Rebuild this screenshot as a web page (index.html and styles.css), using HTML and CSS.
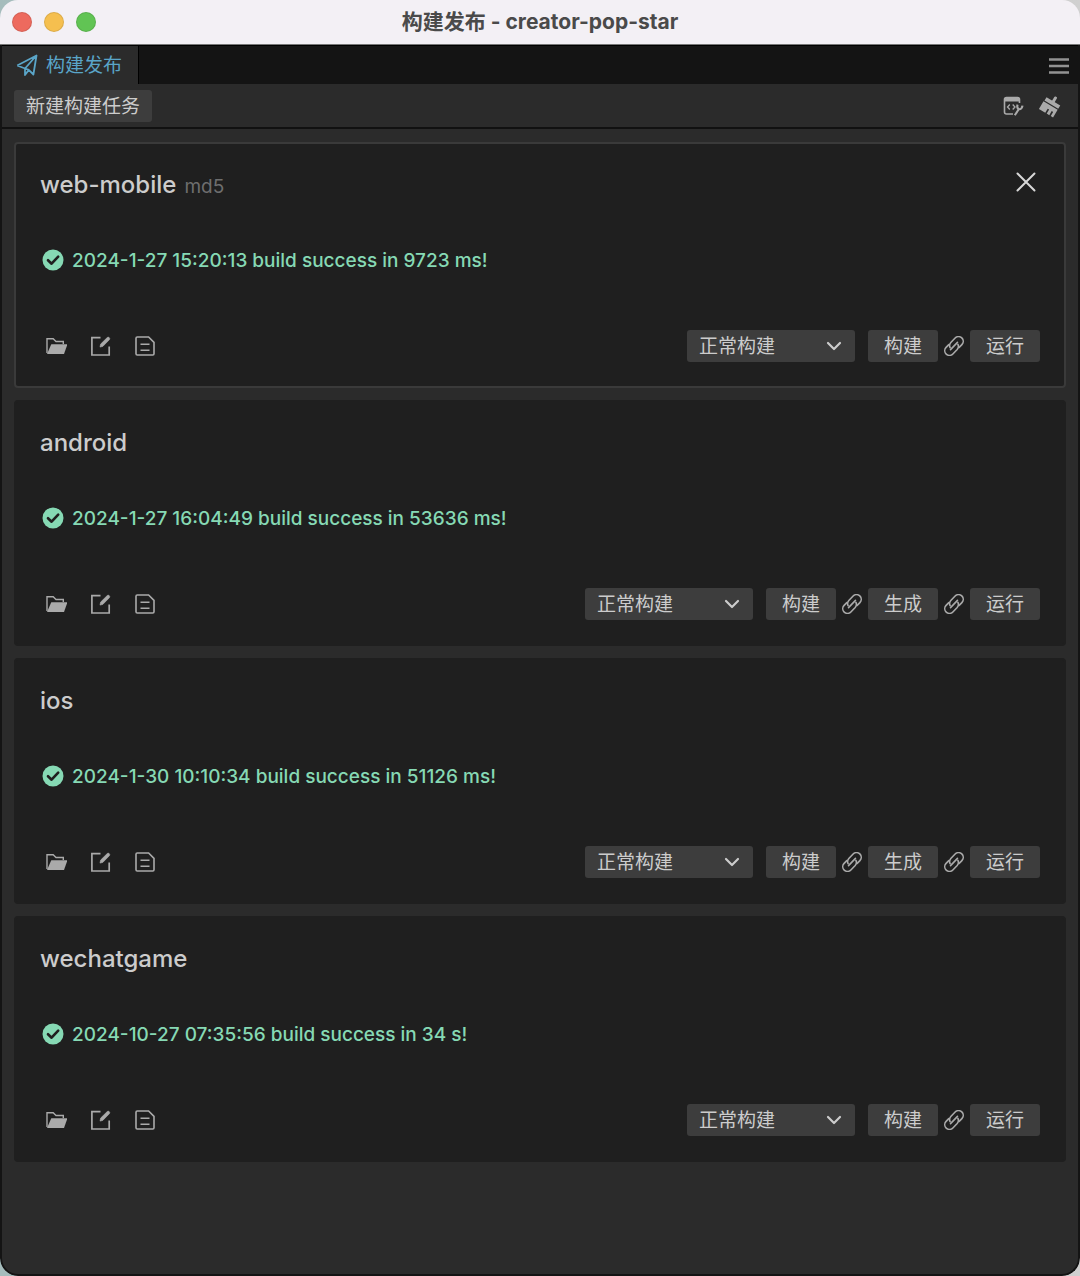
FILE: index.html
```html
<!DOCTYPE html>
<html lang="zh-CN">
<head>
  <meta charset="UTF-8">
  <meta name="viewport" content="width=device-width, initial-scale=1.0">
  <title>构建发布 - creator-pop-star</title>
  <link rel="stylesheet" href="styles.css">
</head>
<body>
  <svg class="sprite" aria-hidden="true">
    <symbol id="i-check" viewBox="0 0 22 22">
      <circle cx="11" cy="11" r="10.5" fill="currentColor"/>
      <path d="M6 11.2l3.6 3.5 6.600-7" fill="none" stroke="#1f1f1f" stroke-width="2.6" stroke-linecap="round" stroke-linejoin="round"/>
    </symbol>
    <symbol id="i-folder" viewBox="-1 0 22 20">
      <path d="M1 17V2.8h6.2L10 5.500h7.300V8" fill="none" stroke="currentColor" stroke-width="1.4"/>
      <path d="M5.3 8.2h16.200L18 18H1z" fill="currentColor"/>
    </symbol>
    <symbol id="i-edit" viewBox="0 0 20 20">
      <path d="M9.500 1.700H.9v17.300h17.300v-8.500" fill="none" stroke="currentColor" stroke-width="1.700"/>
      <path d="M9 11.100l.6-3L16.200 1.600q.9-.9 1.900-.1l.3.3q.8 1 0 1.900L11.800 10.400z" fill="currentColor" stroke="currentColor" stroke-width=".6"/>
    </symbol>
    <symbol id="i-log" viewBox="0 0 20 20">
      <path d="M2.200 1h11.400L19 6.400v11.400q0 1.200-1.200 1.200H2.200Q1 19 1 17.800V2.200Q1 1 2.200 1zM5.500 8.300h9M5.500 14.300h9" fill="none" stroke="currentColor" stroke-width="1.600"/>
    </symbol>
    <symbol id="i-link" viewBox="2 2 20 20">
      <g fill="none" stroke="currentColor" stroke-width="1.600" stroke-linecap="round" stroke-linejoin="round" transform="rotate(-46 12 12)">
        <path d="M14.600 16.700H18.500a4.700 4.700 0 0 0 0-9.400h-6.200a4.700 4.700 0 0 0-4.200 3"/>
        <path d="M9.400 7.300H5.500a4.700 4.700 0 0 0 0 9.400h6.200a4.700 4.700 0 0 0 4.200-3"/>
        <path d="M7 12h10"/>
      </g>
    </symbol>
    <symbol id="i-down" viewBox="0 0 16 16">
      <path d="M2 5l6 6 6-6" fill="none" stroke="currentColor" stroke-width="2.200" stroke-linecap="round" stroke-linejoin="round"/>
    </symbol>
  </svg>

  <div class="window">
    <header class="titlebar">
      <div class="lights">
        <button class="light red" aria-label="关闭窗口"></button>
        <button class="light yellow" aria-label="最小化"></button>
        <button class="light green" aria-label="缩放"></button>
      </div>
      <h1>构建发布 - creator-pop-star</h1>
    </header>

    <div class="panel">
      <nav class="tabs">
        <button class="tab">
          <svg class="plane" viewBox="0 0 22 22"><path d="M1.200 11.500L20.500 1.500 17.400 20.500 12.800 15.900 9 21V14.500L20 2M1.200 11.500L9 14.500M12.800 15.900L9 14.500" fill="none" stroke="currentColor" stroke-width="1.800" stroke-linejoin="round"/></svg>
          <span>构建发布</span>
        </button>
        <button class="icon-btn menu" aria-label="菜单">
          <svg viewBox="0 0 20 20"><path d="M0 4.500h20M0 11h20M0 17.500h20" stroke="currentColor" stroke-width="2.600"/></svg>
        </button>
      </nav>

      <div class="toolbar">
        <button class="btn new-task">新建构建任务</button>
        <div class="tools">
          <button class="icon-btn" aria-label="编译选项">
            <svg viewBox="0 0 20 20">
              <path d="M10 18H3.500q-2 0-2-2V3.500q0-2 2-2h11q2 0 2 2V7" fill="none" stroke="currentColor" stroke-width="1.600"/>
              <path d="M1.500 5.500v-2q0-2 2-2h11q2 0 2 2v2z" fill="currentColor"/>
              <path d="M6.800 8.500L4.500 11l2.300 2.500M9.700 8.500L12 11l-2.300 2.500" fill="none" stroke="currentColor" stroke-width="1.300"/>
              <path d="M11.800 19.300l4.200-6.500M14.600 8.700q-1.200 3.600 1.500 4.500 2.700.2 3.400-3.600" fill="none" stroke="currentColor" stroke-width="2.100"/>
            </svg>
          </button>
          <button class="icon-btn" aria-label="清理缓存">
            <svg viewBox="0 0 20 20">
              <g fill="currentColor" transform="rotate(31 10 10)">
                <rect x="9" y="-1" width="3" height="7" rx="1"/>
                <rect x="2.500" y="4.200" width="16" height="4"/>
                <path d="M2 9.300h16.500v8.900h-2.700v-4.700h-1.700v4.700h-3v-4.700H9.400v4.700H2z"/>
              </g>
            </svg>
          </button>
        </div>
      </div>

      <main class="tasks">
        <section class="task active">
          <div class="task-head">
            <h2>web-mobile</h2><span class="tag">md5</span>
            <button class="icon-btn close" aria-label="删除任务">
              <svg viewBox="0 0 20 20"><path d="M1.500 1.500l17 17M18.500 1.500l-17 17" stroke="currentColor" stroke-width="2" stroke-linecap="round"/></svg>
            </button>
          </div>
          <p class="status"><svg><use href="#i-check"/></svg>2024-1-27 15:20:13 build success in 9723 ms!</p>
          <div class="task-foot">
            <button class="icon-btn folder" aria-label="打开目录"><svg><use href="#i-folder"/></svg></button>
            <button class="icon-btn" aria-label="编辑"><svg><use href="#i-edit"/></svg></button>
            <button class="icon-btn" aria-label="日志"><svg><use href="#i-log"/></svg></button>
            <div class="actions">
              <div class="select"><select aria-label="构建模式"><option>正常构建</option></select><svg><use href="#i-down"/></svg></div>
              <button class="btn">构建</button>
              <svg class="link"><use href="#i-link"/></svg>
              <button class="btn">运行</button>
            </div>
          </div>
        </section>

        <section class="task">
          <div class="task-head"><h2>android</h2></div>
          <p class="status"><svg><use href="#i-check"/></svg>2024-1-27 16:04:49 build success in 53636 ms!</p>
          <div class="task-foot">
            <button class="icon-btn folder" aria-label="打开目录"><svg><use href="#i-folder"/></svg></button>
            <button class="icon-btn" aria-label="编辑"><svg><use href="#i-edit"/></svg></button>
            <button class="icon-btn" aria-label="日志"><svg><use href="#i-log"/></svg></button>
            <div class="actions">
              <div class="select"><select aria-label="构建模式"><option>正常构建</option></select><svg><use href="#i-down"/></svg></div>
              <button class="btn">构建</button>
              <svg class="link"><use href="#i-link"/></svg>
              <button class="btn">生成</button>
              <svg class="link"><use href="#i-link"/></svg>
              <button class="btn">运行</button>
            </div>
          </div>
        </section>

        <section class="task">
          <div class="task-head"><h2>ios</h2></div>
          <p class="status"><svg><use href="#i-check"/></svg>2024-1-30 10:10:34 build success in 51126 ms!</p>
          <div class="task-foot">
            <button class="icon-btn folder" aria-label="打开目录"><svg><use href="#i-folder"/></svg></button>
            <button class="icon-btn" aria-label="编辑"><svg><use href="#i-edit"/></svg></button>
            <button class="icon-btn" aria-label="日志"><svg><use href="#i-log"/></svg></button>
            <div class="actions">
              <div class="select"><select aria-label="构建模式"><option>正常构建</option></select><svg><use href="#i-down"/></svg></div>
              <button class="btn">构建</button>
              <svg class="link"><use href="#i-link"/></svg>
              <button class="btn">生成</button>
              <svg class="link"><use href="#i-link"/></svg>
              <button class="btn">运行</button>
            </div>
          </div>
        </section>

        <section class="task">
          <div class="task-head"><h2>wechatgame</h2></div>
          <p class="status"><svg><use href="#i-check"/></svg>2024-10-27 07:35:56 build success in 34 s!</p>
          <div class="task-foot">
            <button class="icon-btn folder" aria-label="打开目录"><svg><use href="#i-folder"/></svg></button>
            <button class="icon-btn" aria-label="编辑"><svg><use href="#i-edit"/></svg></button>
            <button class="icon-btn" aria-label="日志"><svg><use href="#i-log"/></svg></button>
            <div class="actions">
              <div class="select"><select aria-label="构建模式"><option>正常构建</option></select><svg><use href="#i-down"/></svg></div>
              <button class="btn">构建</button>
              <svg class="link"><use href="#i-link"/></svg>
              <button class="btn">运行</button>
            </div>
          </div>
        </section>
      </main>
    </div>
  </div>
</body>
</html>
```
FILE: styles.css
```css
* {
  box-sizing: border-box;
}
body {
  margin: 0;
  background: linear-gradient(to right, #a5bcbc, #d0d0d0);
  font-family: Inter, "Noto Sans CJK SC", sans-serif;
  font-size: 19px;
  color: #ccc;
}
button, select {
  font: inherit;
  color: inherit;
  border: none;
  margin: 0;
  padding: 0;
}
svg {
  display: block;
  flex: none;
  overflow: visible;
}
.sprite {
  display: none;
}
.window {
  min-height: 100vh;
  display: flex;
  flex-direction: column;
  border-radius: 18px;
  overflow: hidden;
}
.titlebar {
  height: 45px;
  padding: 0 12px;
  display: grid;
  grid-template-columns: 1fr auto 1fr;
  align-items: center;
  background: #f3f0f5;
  border-bottom: 1px solid #777;
}
.titlebar h1 {
  margin: 0;
  font-size: 21px;
  line-height: 28px;
  font-weight: 700;
  color: #4a4a4a;
}
.lights {
  display: flex;
  gap: 12px;
}
.light {
  width: 20px;
  height: 20px;
  border-radius: 50%;
  border: 1px solid rgba(0, 0, 0, 0.1);
}
.red {
  background: #ed6a5e;
}
.yellow {
  background: #f5bf4f;
}
.green {
  background: #61c454;
}
.panel {
  flex: 1;
  display: flex;
  flex-direction: column;
  background: #2b2b2b;
  border: 2px solid #141414;
  border-top: none;
  border-radius: 0 0 18px 18px;
}
.tabs {
  display: flex;
  justify-content: space-between;
  height: 39px;
  background: #141414;
  border-top: 1px solid #000;
}
.tab {
  display: flex;
  align-items: center;
  gap: 8px;
  padding: 0 16px 0 14px;
  background: #2b2b2b;
  border-right: 1px solid #000;
  color: #5aa5c8;
}
.tab span {
  padding-bottom: 4px;
}
.plane {
  width: 22px;
  height: 22px;
}
.toolbar {
  display: flex;
  justify-content: space-between;
  align-items: center;
  height: 45px;
  padding: 0 18px 0 12px;
  border-bottom: 2px solid #111;
}
.tools {
  display: flex;
  gap: 17px;
}
.icon-btn {
  background: none;
  color: #aaa;
  cursor: pointer;
}
.icon-btn svg {
  width: 20px;
  height: 20px;
}
.menu {
  padding-right: 9px;
  color: #929292;
}
.btn {
  min-width: 70px;
  height: 32px;
  padding-bottom: 3px;
  background: #3d3d3d;
  border-radius: 3px;
  cursor: pointer;
}
.new-task {
  padding: 0 12px 2px;
}
.tasks {
  flex: 1;
  display: flex;
  flex-direction: column;
  gap: 12px;
  padding: 13px 12px;
}
.task {
  padding: 24px;
  background: #1f1f1f;
  border: 2px solid #1f1f1f;
  border-radius: 4px;
}
.active {
  border-color: #3a3a3a;
}
.task-head {
  display: flex;
  align-items: baseline;
  gap: 8px;
  height: 34px;
}
.task-head h2 {
  margin: 0;
  font-size: 24px;
  line-height: 34px;
  font-weight: 500;
}
.tag {
  color: #6e6e6e;
}
.close {
  align-self: center;
  margin-left: auto;
  padding: 0 4px 6px;
  color: #d8d8d8;
}
.status {
  display: flex;
  align-items: center;
  gap: 8px;
  height: 32px;
  margin: 42px 0 54px;
  padding-left: 2px;
  font-weight: 500;
  color: #86d9b4;
}
.status svg {
  width: 22px;
  height: 22px;
}
.task-foot {
  display: flex;
  align-items: center;
  gap: 24px;
  padding-left: 5px;
}
.folder svg {
  width: 22px;
}
.actions {
  display: flex;
  align-items: center;
  margin-left: auto;
}
.select {
  position: relative;
  margin-right: 13px;
}
.select select {
  display: block;
  width: 168px;
  height: 32px;
  padding: 0 12px;
  background: #3d3d3d;
  border-radius: 3px;
  appearance: none;
}
.select svg {
  position: absolute;
  right: 13px;
  top: 8px;
  width: 16px;
  height: 16px;
  pointer-events: none;
}
.link {
  width: 20px;
  height: 20px;
  margin: 0 6px;
  color: #aaa;
}
```
